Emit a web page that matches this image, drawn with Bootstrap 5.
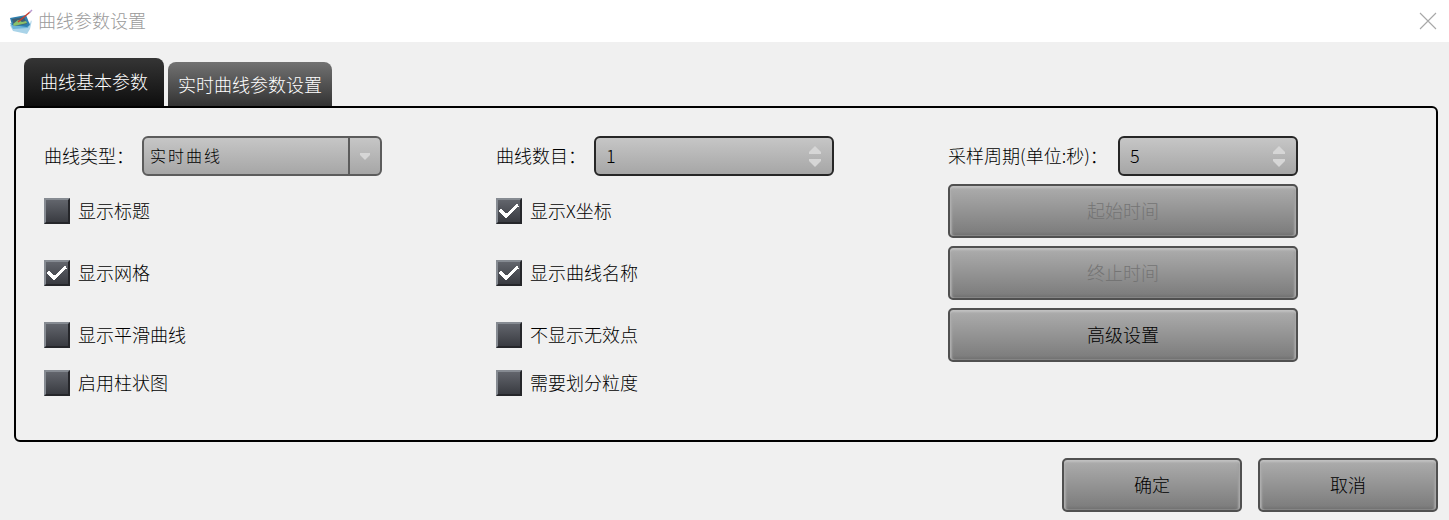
<!DOCTYPE html>
<html lang="zh-CN">
<head>
  <meta charset="UTF-8">
  <title>曲线参数设置</title>
  <link href="https://cdn.jsdelivr.net/npm/bootstrap@5.3.0/dist/css/bootstrap.min.css" rel="stylesheet">
  <style>
    html, body { height: 520px; overflow: hidden; }
    body { background: #f0f0f0; font-family: "Noto Sans CJK SC", sans-serif; font-size: 18px; font-weight: 300; color: #000; line-height: 1.2; }
    .title-bar { height: 42px; background: #fff; padding: 0 12px 0 9px; color: #9a9a9a; }
    .tab-strip { height: 64px; padding: 16px 0 0 24px; gap: 4px; border: 0; }
    .tab-strip .nav-link { color: #fff; border: 0; padding: 0; border-radius: 8px 8px 0 0; }
    .tab-on { width: 140px; height: 48px; background: linear-gradient(#353535, #0e0e0e); }
    .tab-off { width: 164px; height: 44px; padding-top: 1px !important; background: linear-gradient(#727272, #333); }
    .tab-strip .tab-on { color: #fff; }
    .panel-box { height: 336px; margin: 0 11px 0 14px; border: 2px solid #000; border-radius: 6px; padding: 28px 0 0 28px; display: grid; grid-template-columns: 452px 452px 350px; }
    .field-row { height: 40px; }
    .field-lbl { width: 98px; }
    .field-lbl-wide { width: 170px; }
    .val-box { height: 40px; border: 2px solid #262626; border-radius: 6px; background: linear-gradient(#c6c6c6, #a6a6a6); }
    .combo-w { width: 240px; border-color: #5c5c5c; }
    .spin-w { width: 240px; }
    .spin-w-sm { width: 180px; }
    .combo-txt { padding-left: 6px; font-size: 16px; letter-spacing: 2px; }
    .spin-txt { padding-left: 10px; }
    .combo-arrow { width: 32px; border-left: 2px solid #5c5c5c; }
    .spin-arrows { width: 34px; gap: 5px; }
    .chk-row { height: 62px; gap: 8px; }
    .chk-row-first { margin-top: 4px; }
    .chk-row-last { height: 34px; }
    .chk-box { width: 26px; height: 26px; border: 2px solid; border-color: #868b92 #25262a #25262a #868b92; background: linear-gradient(#62656c, #393b41); }
    .action-col { width: 350px; gap: 8px; padding-top: 8px; }
    .gray-btn { height: 54px; width: 350px; border: 2px solid #505050; border-radius: 5px; background: linear-gradient(#adadad, #7a7a7a); box-shadow: inset 0 2px 2px #c0c0c0, inset 2px 0 2px #a8a8a8, inset -2px 0 2px #a0a0a0, inset 0 -2px 2px #6c6c6c; color: #000; font-size: 18px; font-weight: 300; padding: 0 0 2px; }
    .gray-btn:disabled { background: linear-gradient(#adadad, #7a7a7a); border-color: #505050; color: #747474; opacity: 1; }
    .foot-bar { height: 71px; padding: 16px 11px 0 0; gap: 16px; }
    .foot-btn { width: 180px; }
  </style>
</head>
<body>
  <!-- 标题栏 -->
  <div class="title-bar d-flex align-items-center justify-content-between">
    <div class="d-flex align-items-center gap-1">
      <svg width="25" height="26" viewBox="0 0 25 26">
        <path d="M1 17l17 3 5-8-2 9-3 5-14-3z" fill="#a9d3e8"/>
        <path d="M1 15l18 3 3-6-3 8-15 1z" fill="#6cb4d8"/>
        <path d="M1 10l16-3 4 10-3 2-15-2z" fill="#2f7fae"/>
        <path d="M3 11l12-2 3 7-13 2z" fill="#3e5f73"/>
        <path d="M4 16l5-4 4 2 4-1 1 2-13 3z" fill="#8ac06a"/>
        <path d="M9 14L21 4" stroke="#c8402f" stroke-width="1.5"/>
        <path d="M20.500 4.500L23 2" stroke="#b89ad0" stroke-width="1.5"/>
      </svg>
      <span>曲线参数设置</span>
    </div>
    <svg width="18" height="18" viewBox="0 0 18 18"><path d="M1 1l16 16M17 1L1 17" stroke="#a8a8a8" stroke-width="1.1"/></svg>
  </div>

  <!-- 选项卡 -->
  <ul class="nav tab-strip align-items-end">
    <li class="nav-item"><a class="nav-link tab-on d-flex align-items-center justify-content-center" href="#">曲线基本参数</a></li>
    <li class="nav-item"><a class="nav-link tab-off d-flex align-items-center justify-content-center" href="#">实时曲线参数设置</a></li>
  </ul>

  <div class="panel-box">
    <div>
      <div class="field-row d-flex align-items-center">
        <span class="field-lbl">曲线类型：</span>
        <div class="val-box combo-w d-flex align-items-center justify-content-between">
          <span class="combo-txt">实时曲线</span>
          <div class="combo-arrow h-100 d-flex align-items-center justify-content-center">
            <svg width="12" height="8"><path d="M1 1h10v2L6 8 1 3z" fill="#d6d6d6"/></svg>
          </div>
        </div>
      </div>
      <div class="chk-row chk-row-first d-flex align-items-center"><span class="chk-box"></span><span>显示标题</span></div>
      <div class="chk-row d-flex align-items-center">
        <span class="chk-box d-flex align-items-center justify-content-center"><svg width="20" height="16" viewBox="0 0 20 16"><path d="M1 7l6 6L19 2" fill="none" stroke="#fff" stroke-width="3" shape-rendering="crispEdges"/></svg></span><span>显示网格</span>
      </div>
      <div class="chk-row d-flex align-items-center"><span class="chk-box"></span><span>显示平滑曲线</span></div>
      <div class="chk-row chk-row-last d-flex align-items-center"><span class="chk-box"></span><span>启用柱状图</span></div>
    </div>

    <div>
      <div class="field-row d-flex align-items-center">
        <span class="field-lbl">曲线数目：</span>
        <div class="val-box spin-w d-flex align-items-center justify-content-between">
          <span class="spin-txt">1</span>
          <div class="spin-arrows d-flex flex-column align-items-center">
            <svg width="12" height="8"><path d="M6 0l6 6v2H0V6z" fill="#d6d6d6"/></svg>
            <svg width="12" height="8"><path d="M0 0h12v2L6 8 0 2z" fill="#d6d6d6"/></svg>
          </div>
        </div>
      </div>
      <div class="chk-row chk-row-first d-flex align-items-center">
        <span class="chk-box d-flex align-items-center justify-content-center"><svg width="20" height="16" viewBox="0 0 20 16"><path d="M1 7l6 6L19 2" fill="none" stroke="#fff" stroke-width="3" shape-rendering="crispEdges"/></svg></span><span>显示X坐标</span>
      </div>
      <div class="chk-row d-flex align-items-center">
        <span class="chk-box d-flex align-items-center justify-content-center"><svg width="20" height="16" viewBox="0 0 20 16"><path d="M1 7l6 6L19 2" fill="none" stroke="#fff" stroke-width="3" shape-rendering="crispEdges"/></svg></span><span>显示曲线名称</span>
      </div>
      <div class="chk-row d-flex align-items-center"><span class="chk-box"></span><span>不显示无效点</span></div>
      <div class="chk-row chk-row-last d-flex align-items-center"><span class="chk-box"></span><span>需要划分粒度</span></div>
    </div>

    <div>
      <div class="field-row d-flex align-items-center">
        <span class="field-lbl-wide">采样周期(单位:秒)：</span>
        <div class="val-box spin-w-sm d-flex align-items-center justify-content-between">
          <span class="spin-txt">5</span>
          <div class="spin-arrows d-flex flex-column align-items-center">
            <svg width="12" height="8"><path d="M6 0l6 6v2H0V6z" fill="#d6d6d6"/></svg>
            <svg width="12" height="8"><path d="M0 0h12v2L6 8 0 2z" fill="#d6d6d6"/></svg>
          </div>
        </div>
      </div>
      <div class="action-col d-flex flex-column">
        <button type="button" class="btn gray-btn" disabled>起始时间</button>
        <button type="button" class="btn gray-btn" disabled>终止时间</button>
        <button type="button" class="btn gray-btn">高级设置</button>
      </div>
    </div>
  </div>

  <div class="foot-bar d-flex justify-content-end">
    <button type="button" class="btn gray-btn foot-btn">确定</button>
    <button type="button" class="btn gray-btn foot-btn">取消</button>
  </div>
  <script src="https://cdn.jsdelivr.net/npm/bootstrap@5.3.0/dist/js/bootstrap.bundle.min.js"></script>
</body>
</html>
